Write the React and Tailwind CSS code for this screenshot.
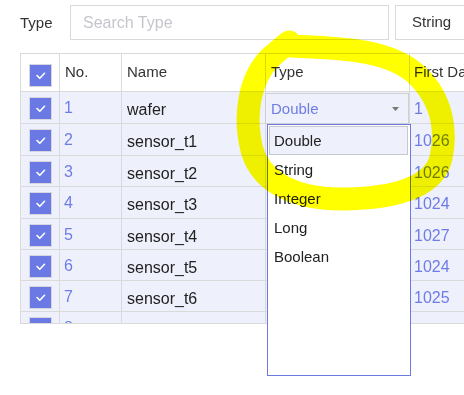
import React from "react";

const rows = [
  { no: "1", name: "wafer", first: "1", h: "h-[32px]" },
  { no: "2", name: "sensor_t1", first: "1026", h: "h-[32px]" },
  { no: "3", name: "sensor_t2", first: "1026", h: "h-[31px]" },
  { no: "4", name: "sensor_t3", first: "1024", h: "h-[32px]" },
  { no: "5", name: "sensor_t4", first: "1027", h: "h-[31px]" },
  { no: "6", name: "sensor_t5", first: "1024", h: "h-[31px]" },
  { no: "7", name: "sensor_t6", first: "1025", h: "h-[31px]" },
  { no: "8", name: "sensor_t7", first: "", h: "h-[31px]" },
];

function Check() {
  return (
    <div className="w-[23px] h-[23px] border border-[#d5d6de] bg-[#6b79e5] flex items-center justify-center">
      <svg width="21" height="21" viewBox="0 0 21 21">
        <polyline points="7,10.5 9.8,13.3 14.5,8.3" fill="none" stroke="#ffffff" strokeWidth="1.6" strokeLinecap="round" strokeLinejoin="round" />
      </svg>
    </div>
  );
}

const items = ["Double", "String", "Integer", "Long", "Boolean"];

export default function App() {
  return (
    <div className="relative w-[464px] h-[395px] overflow-hidden bg-white font-['Liberation_Sans',Arial,sans-serif]">
      {/* top search bar */}
      <div className="flex items-center h-[35px] mt-[5px]">
        <span className="ml-[20px] w-[50px] shrink-0 text-[15px] leading-[17px] text-[#333]">Type</span>
        <div className="w-[319px] shrink-0 h-[35px] border border-[#dadada] flex items-center pl-[12px] text-[16px] text-[#c4c6cc]">
          Search Type
        </div>
        <div className="ml-[6px] w-[100px] shrink-0 h-[35px] border border-[#dadada] flex items-center pl-[16px] text-[15px] text-[#333]">
          String
        </div>
      </div>

      {/* table */}
      <div className="relative mt-[13px] ml-[20px] w-[600px] border-l border-t border-b border-[#dadada] text-[#222]">
        {/* header */}
        <div className="flex h-[38px] border-b border-[#dadada] bg-white text-[15px] leading-[17px] text-[#333]">
          <div className="w-[39px] shrink-0 border-r border-[#dadada] flex justify-center pt-[10px]">
            <Check />
          </div>
          <div className="w-[62px] shrink-0 border-r border-[#dadada] pl-[5px] pt-[9px]">No.</div>
          <div className="w-[144px] shrink-0 border-r border-[#dadada] pl-[5px] pt-[9px]">Name</div>
          <div className="w-[144px] shrink-0 border-r border-[#dadada] pl-[5px] pt-[9px]">Type</div>
          <div className="flex-1 pl-[4px] pt-[9px] whitespace-nowrap">First Data</div>
        </div>

        {/* body */}
        <div className="h-[231px] overflow-hidden">
          {rows.map((r, i) => (
            <div key={r.no} className={`flex ${r.h} border-b border-[#dadada] bg-[#eef0fb] text-[16px] leading-[18px]`}>
              <div className="w-[39px] shrink-0 border-r border-[#dadada] flex justify-center pt-[5px]">
                <Check />
              </div>
              <div className="w-[62px] shrink-0 border-r border-[#dadada] pl-[4px] pt-[7px] text-[#6e7ce6]">{r.no}</div>
              <div className="w-[144px] shrink-0 border-r border-[#dadada] pl-[5px] pt-[9px] text-[#222]">{r.name}</div>
              <div className="w-[144px] shrink-0 border-r border-[#dadada]">
                {i === 0 && (
                  <div className="mt-[1px] -ml-[1px] h-[31px] w-[144px] border border-[#cfcfd4] bg-[#eef0fb] flex items-center justify-between pl-[5px] pr-[9px] text-[15px] text-[#6e7ce6]">
                    <span>Double</span>
                    <svg width="7" height="4" viewBox="0 0 7 4">
                      <polygon points="0,0 7,0 3.5,4" fill="#777" />
                    </svg>
                  </div>
                )}
              </div>
              <div className="flex-1 pl-[4px] pt-[8px] text-[#6e7ce6]">{r.first}</div>
            </div>
          ))}
        </div>

        {/* dropdown menu */}
        <div className="absolute left-[246px] top-[70px] w-[144px] h-[252px] border border-[#6c7ae0] bg-white pt-[1px] pl-[1px] pr-[2px] text-[15px] leading-[17px] text-[#222]">
          {items.map((t, i) => (
            <div
              key={t}
              className={
                i === 0
                  ? "h-[29px] border border-[#c9c9cc] bg-[#eef0fb] flex items-center pl-[4px]"
                  : "h-[29px] border border-transparent flex items-center pl-[4px]"
              }
            >
              {t}
            </div>
          ))}
        </div>
      </div>

      {/* yellow highlighter annotation */}
      <svg
        className="absolute left-0 top-0 pointer-events-none mix-blend-multiply"
        width="464"
        height="395"
        viewBox="0 0 464 395"
      >
        <path
          d="M 291 46 C 335 48, 390 48, 418 76 C 442 100, 447 130, 441 158 C 434 186, 398 198, 346 199 C 300 200, 262 185, 252 150 C 243 115, 250 78, 270 58 C 278 51, 284 46, 289 42"
          fill="none"
          stroke="#ffff00"
          strokeWidth="23"
          strokeLinecap="round"
          strokeLinejoin="round"
        />
      </svg>
    </div>
  );
}
